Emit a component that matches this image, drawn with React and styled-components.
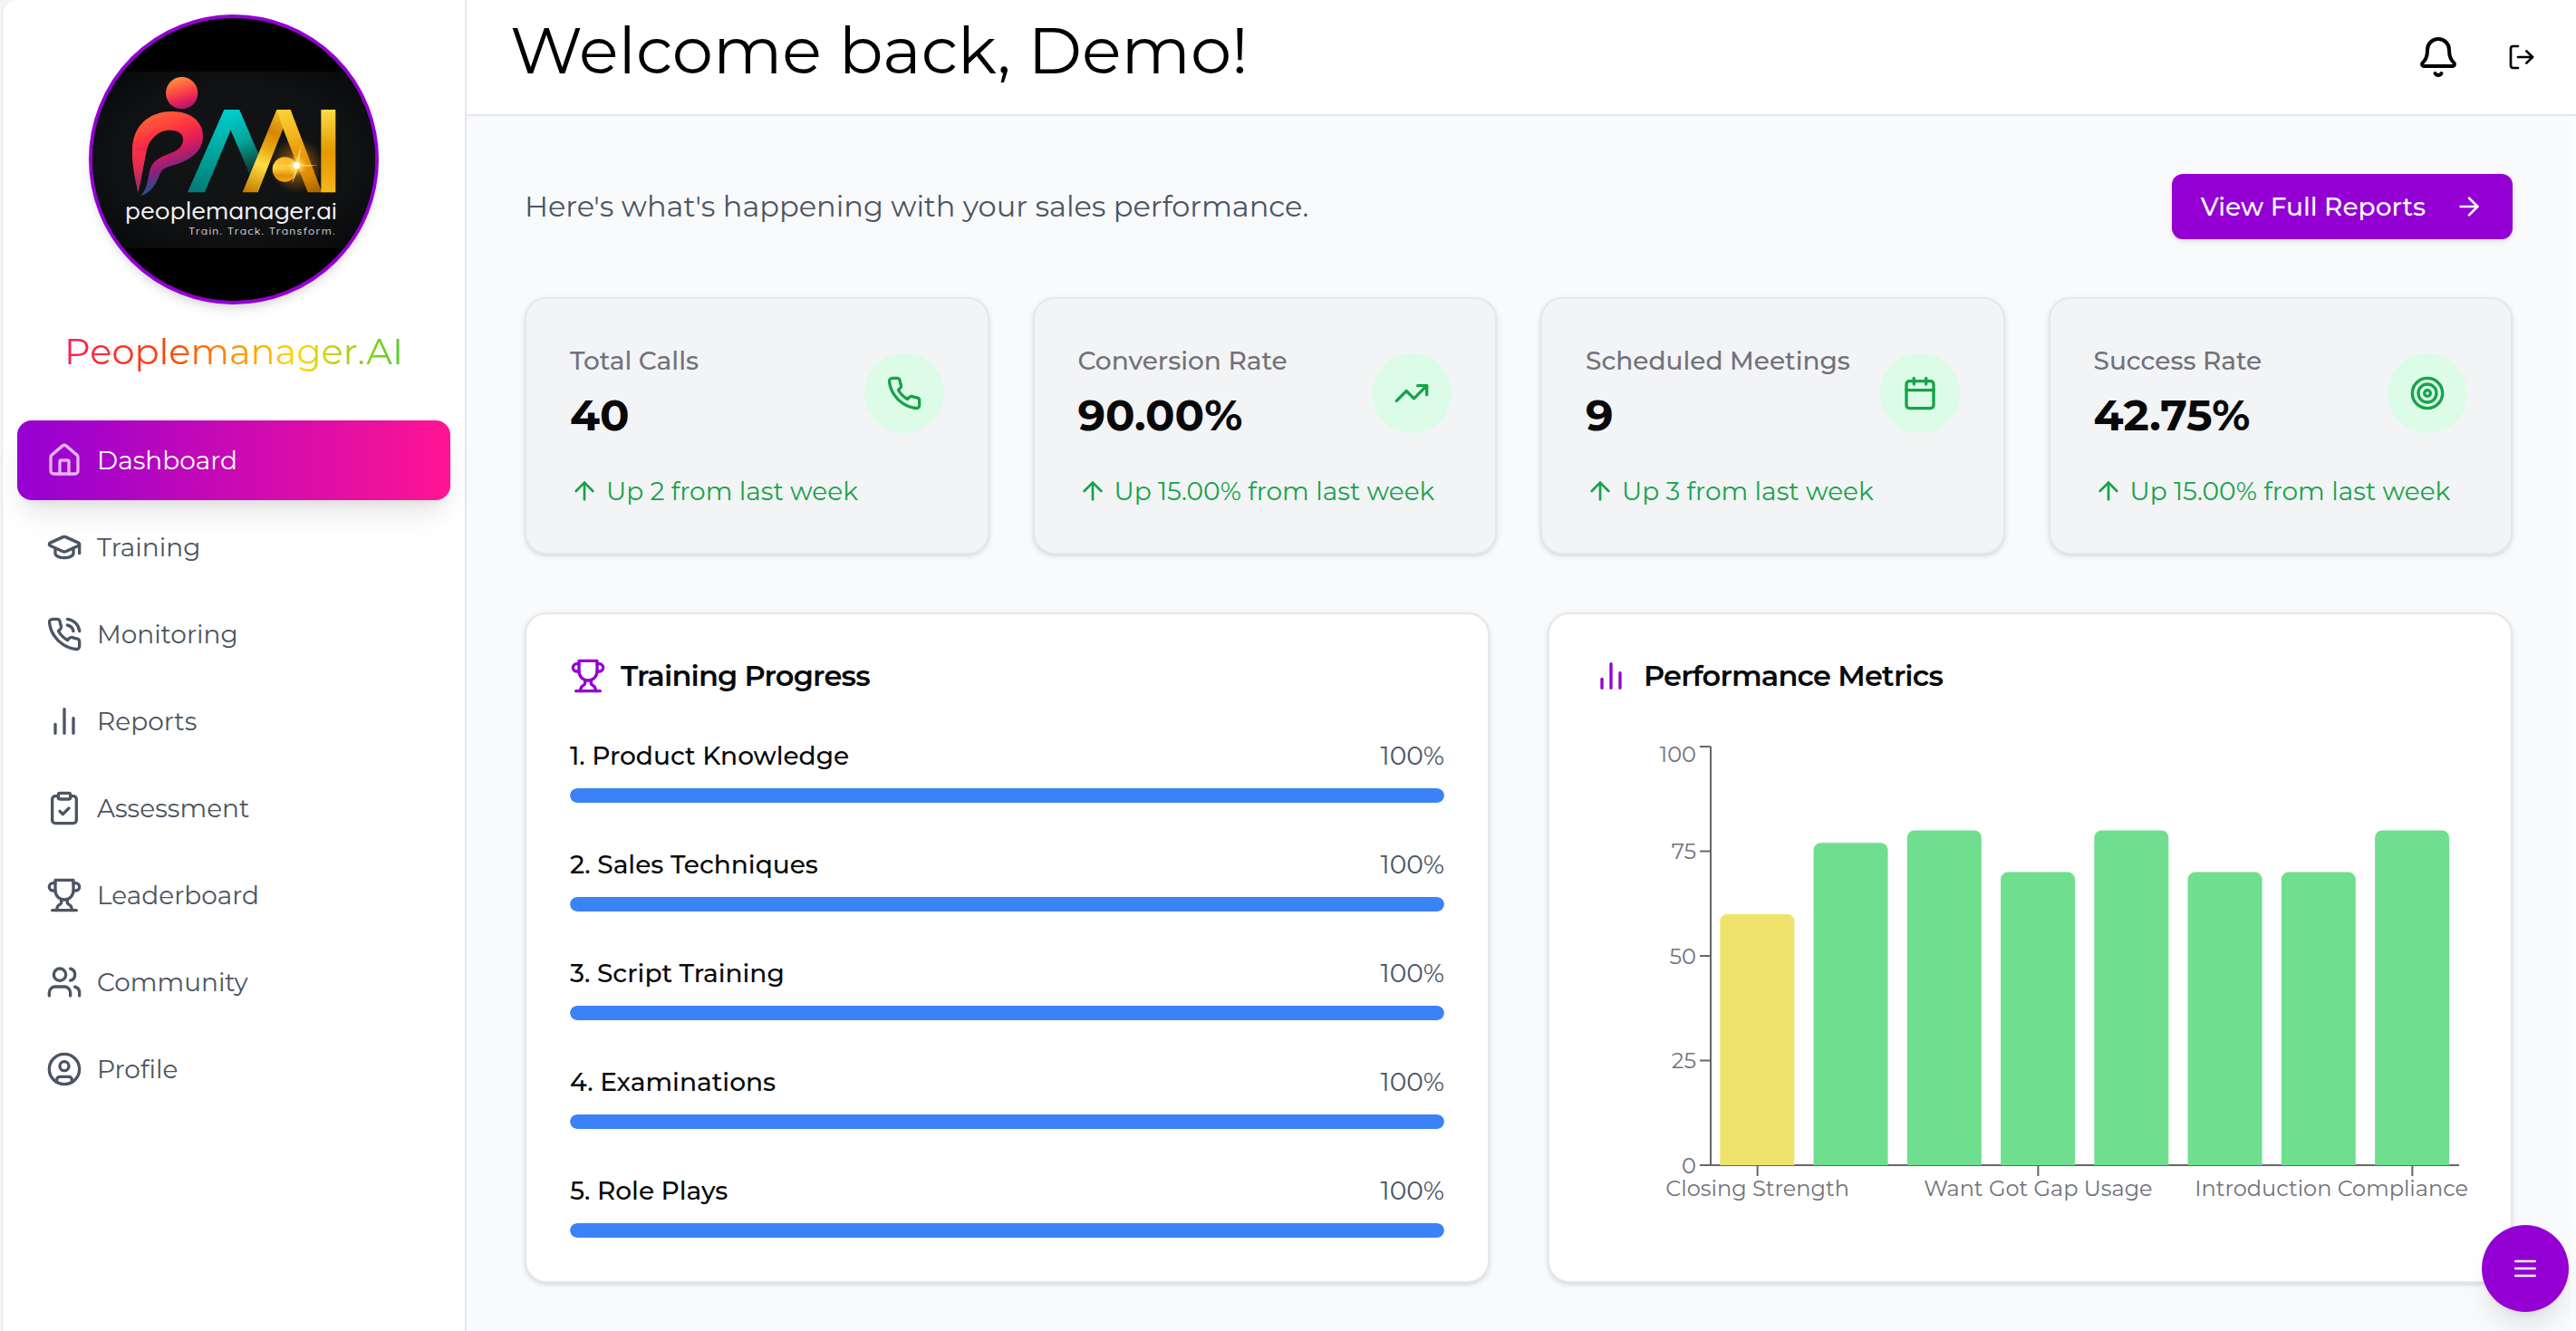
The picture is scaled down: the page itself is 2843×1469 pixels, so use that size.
import React from "react";
import styled, { createGlobalStyle, css } from "styled-components";

const GlobalStyle = createGlobalStyle`
  *, *::before, *::after { box-sizing: border-box; }
  html, body { margin: 0; padding: 0; }
  body {
    font-family: "Montserrat", "Inter", sans-serif;
    font-size: 28px;
    line-height: 40px;
    color: #09090b;
    background: #f5f5f5;
    overflow: hidden;
  }
`;

/* ---------- icons ---------- */

const IconSvg = styled.svg`
  display: block;
  flex: none;
  width: ${(p) => p.$size}px;
  height: ${(p) => p.$size}px;
  fill: none;
  stroke: currentColor;
  stroke-width: 2;
  stroke-linecap: round;
  stroke-linejoin: round;
`;

const PHONE =
  "M22 16.92v3a2 2 0 0 1-2.18 2 19.79 19.79 0 0 1-8.63-3.07 19.5 19.5 0 0 1-6-6 19.79 19.79 0 0 1-3.07-8.67A2 2 0 0 1 4.11 2h3a2 2 0 0 1 2 1.72 12.84 12.84 0 0 0 .7 2.81 2 2 0 0 1-.45 2.11L8.09 9.91a16 16 0 0 0 6 6l1.27-1.27a2 2 0 0 1 2.11-.45 12.84 12.84 0 0 0 2.81.7A2 2 0 0 1 22 16.92z";

const ICONS = {
  house: (
    <>
      <path d="M15 21v-8a1 1 0 0 0-1-1h-4a1 1 0 0 0-1 1v8" />
      <path d="M3 10a2 2 0 0 1 .709-1.528l7-5.999a2 2 0 0 1 2.582 0l7 5.999A2 2 0 0 1 21 10v9a2 2 0 0 1-2 2H5a2 2 0 0 1-2-2z" />
    </>
  ),
  cap: (
    <>
      <path d="M21.42 10.922a1 1 0 0 0-.019-1.838L12.83 5.18a2 2 0 0 0-1.66 0L2.6 9.08a1 1 0 0 0 0 1.832l8.57 3.908a2 2 0 0 0 1.66 0z" />
      <path d="M22 10v6" />
      <path d="M6 12.5V16a6 3 0 0 0 12 0v-3.5" />
    </>
  ),
  phoneCall: (
    <>
      <path d={PHONE} />
      <path d="M14.05 2a9 9 0 0 1 8 7.94" />
      <path d="M14.05 6A5 5 0 0 1 18 10" />
    </>
  ),
  phone: <path d={PHONE} />,
  bars: (
    <>
      <path d="M18 20V10" />
      <path d="M12 20V4" />
      <path d="M6 20v-6" />
    </>
  ),
  clipboard: (
    <>
      <rect width="8" height="4" x="8" y="2" rx="1" ry="1" />
      <path d="M16 4h2a2 2 0 0 1 2 2v14a2 2 0 0 1-2 2H6a2 2 0 0 1-2-2V6a2 2 0 0 1 2-2h2" />
      <path d="m9 14 2 2 4-4" />
    </>
  ),
  trophy: (
    <>
      <path d="M6 9H4.5a2.5 2.5 0 0 1 0-5H6" />
      <path d="M18 9h1.5a2.5 2.5 0 0 0 0-5H18" />
      <path d="M4 22h16" />
      <path d="M10 14.66V17c0 .55-.47.98-.97 1.21C7.85 18.75 7 20.24 7 22" />
      <path d="M14 14.66V17c0 .55.47.98.97 1.21C16.15 18.75 17 20.24 17 22" />
      <path d="M18 2H6v7a6 6 0 0 0 12 0V2Z" />
    </>
  ),
  users: (
    <>
      <path d="M16 21v-2a4 4 0 0 0-4-4H6a4 4 0 0 0-4 4v2" />
      <circle cx="9" cy="7" r="4" />
      <path d="M22 21v-2a4 4 0 0 0-3-3.87" />
      <path d="M16 3.13a4 4 0 0 1 0 7.75" />
    </>
  ),
  user: (
    <>
      <circle cx="12" cy="12" r="10" />
      <circle cx="12" cy="10" r="3" />
      <path d="M7 20.662V19a2 2 0 0 1 2-2h6a2 2 0 0 1 2 2v1.662" />
    </>
  ),
  bell: (
    <>
      <path d="M10.268 21a2 2 0 0 0 3.464 0" />
      <path d="M3.262 15.326A1 1 0 0 0 4 17h16a1 1 0 0 0 .74-1.673C19.41 13.956 18 12.499 18 8A6 6 0 0 0 6 8c0 4.499-1.411 5.956-2.738 7.326" />
    </>
  ),
  logout: (
    <>
      <path d="M9 21H5a2 2 0 0 1-2-2V5a2 2 0 0 1 2-2h4" />
      <path d="m16 17 5-5-5-5" />
      <path d="M21 12H9" />
    </>
  ),
  arrowRight: (
    <>
      <path d="M5 12h14" />
      <path d="m12 5 7 7-7 7" />
    </>
  ),
  arrowUp: (
    <>
      <path d="m5 12 7-7 7 7" />
      <path d="M12 19V5" />
    </>
  ),
  trending: (
    <>
      <path d="m22 7-8.5 8.5-5-5L2 17" />
      <path d="M16 7h6v6" />
    </>
  ),
  calendar: (
    <>
      <path d="M8 2v4" />
      <path d="M16 2v4" />
      <rect width="18" height="18" x="3" y="4" rx="2" />
      <path d="M3 10h18" />
    </>
  ),
  target: (
    <>
      <circle cx="12" cy="12" r="10" />
      <circle cx="12" cy="12" r="6" />
      <circle cx="12" cy="12" r="2" />
    </>
  ),
  menu: (
    <>
      <path d="M4 12h16" />
      <path d="M4 6h16" />
      <path d="M4 18h16" />
    </>
  ),
};

const Icon = ({ name, size = 40 }) => (
  <IconSvg $size={size} viewBox="0 0 24 24" aria-hidden="true">
    {ICONS[name]}
  </IconSvg>
);

/* ---------- shell ---------- */

const Page = styled.div`
  display: flex;
  height: 1469px;
  padding-left: 2px;
`;

const Sidebar = styled.aside`
  flex: none;
  display: flex;
  flex-direction: column;
  align-items: center;
  width: 513px;
  padding: 16px 16px 0;
  background: #fff;
  border-left: 1px solid #e5e5e5;
  border-right: 2px solid #e5e7eb;
  border-top-left-radius: 16px;
`;

const LogoFrame = styled.div`
  width: 320px;
  height: 320px;
  border: 4px solid #9400d3;
  border-radius: 50%;
  background: #000;
  overflow: hidden;
  box-shadow: 0 8px 12px -2px rgba(0, 0, 0, 0.1), 0 4px 8px -4px rgba(0, 0, 0, 0.1);
`;

const LogoSvg = styled.svg`
  display: block;
  width: 312px;
  height: 312px;
`;

const LogoText = styled.text`
  font-family: "Quicksand", "Comfortaa", "Montserrat", sans-serif;
  font-weight: ${(p) => p.$weight};
  font-size: ${(p) => p.$size}px;
  fill: ${(p) => p.$fill};
`;

const Brand = styled.div`
  width: 414px;
  margin: 23px 0 48px;
  text-align: center;
  font-size: 40px;
  line-height: 57px;
  color: transparent;
  background: linear-gradient(90deg, #ff1464, #ff4500, #ffd700, #32cd32);
  -webkit-background-clip: text;
  background-clip: text;
`;

const Nav = styled.nav`
  align-self: stretch;
  display: flex;
  flex-direction: column;
  gap: 8px;
`;

const NavItem = styled.a`
  display: flex;
  align-items: center;
  gap: 16px;
  height: 88px;
  padding: 0 32px;
  border-radius: 16px;
  color: #4b5563;
  ${(p) =>
    p.$active &&
    css`
      color: #fff;
      background: linear-gradient(90deg, #9400d3, #ff1493);
      box-shadow: 0 20px 30px -6px rgba(0, 0, 0, 0.1), 0 8px 12px -8px rgba(0, 0, 0, 0.1);
      ${IconSvg} {
        opacity: 0.7;
      }
    `}
`;

const Content = styled.div`
  flex: 1;
  min-width: 0;
  display: flex;
  flex-direction: column;
`;

const Header = styled.header`
  flex: none;
  display: flex;
  align-items: center;
  gap: 52px;
  height: 128px;
  padding: 0 44px 0 48px;
  background: #fff;
  border-bottom: 2px solid #e5e7eb;
  color: #000;
`;

const Welcome = styled.h1`
  flex: 1;
  margin: 0 0 16px;
  font-size: 72px;
  font-weight: 400;
  line-height: 80px;
`;

const Main = styled.main`
  flex: 1;
  min-height: 0;
  display: flex;
  flex-direction: column;
  gap: 64px;
  padding: 64px 64px 0;
  background: #f9fafb;
  border-right: 6px solid #fbfcfd;
`;

const Intro = styled.div`
  display: flex;
  align-items: center;
  justify-content: space-between;
  height: 72px;
`;

const Subtitle = styled.p`
  margin: 0;
  font-size: 32px;
  color: #4b5563;
`;

const ReportsButton = styled.button`
  display: flex;
  align-items: center;
  gap: 32px;
  height: 72px;
  padding: 0 32px;
  border: 0;
  border-radius: 12px;
  background: #9400d3;
  color: #fafafa;
  font: inherit;
  font-weight: 500;
  box-shadow: 0 2px 6px rgba(0, 0, 0, 0.1), 0 2px 4px -2px rgba(0, 0, 0, 0.1);
`;

/* ---------- stat cards ---------- */

const surface = css`
  border: 2px solid #e5e7eb;
  border-radius: 24px;
  box-shadow: 0 2px 6px rgba(0, 0, 0, 0.1), 0 2px 4px -2px rgba(0, 0, 0, 0.1);
`;

const Stats = styled.section`
  display: grid;
  grid-template-columns: repeat(4, 1fr);
  gap: 48px;
`;

const StatCard = styled.article`
  ${surface}
  display: flex;
  flex-direction: column;
  gap: 32px;
  padding: 48px;
  background: #f3f4f6;
`;

const StatTop = styled.div`
  display: flex;
  align-items: center;
  justify-content: space-between;
`;

const StatText = styled.div`
  display: flex;
  flex-direction: column;
  gap: 8px;
`;

const StatLabel = styled.span`
  font-weight: 500;
  color: #71717a;
  white-space: nowrap;
`;

const StatValue = styled.span`
  font-size: 48px;
  font-weight: 700;
  line-height: 64px;
`;

const StatBadge = styled.div`
  padding: 24px;
  border-radius: 50%;
  background: #dcfce7;
  color: #16a34a;
`;

const Trend = styled.div`
  display: flex;
  align-items: center;
  gap: 8px;
  color: #16a34a;
  white-space: nowrap;
`;

/* ---------- panels ---------- */

const Panels = styled.section`
  display: grid;
  grid-template-columns: 1fr 1fr;
  gap: 64px;
`;

const Panel = styled.article`
  ${surface}
  display: flex;
  flex-direction: column;
  gap: 48px;
  height: 740px;
  padding: 48px;
  background: #fff;
`;

const PanelTitle = styled.h2`
  display: flex;
  align-items: center;
  gap: 16px;
  margin: 0;
  font-size: 32px;
  font-weight: 600;
  letter-spacing: -0.8px;

  ${IconSvg} {
    color: #9400d3;
  }
`;

const Modules = styled.div`
  display: flex;
  flex-direction: column;
  gap: 48px;
`;

const Module = styled.div`
  display: flex;
  flex-direction: column;
  gap: 16px;
`;

const ModuleHead = styled.div`
  display: flex;
  justify-content: space-between;
`;

const ModuleName = styled.span`
  font-weight: 500;
`;

const ModulePercent = styled.span`
  color: #4b5563;
`;

const Track = styled.div`
  height: 16px;
  border-radius: 8px;
  background: #fff;
  overflow: hidden;
`;

const Fill = styled.div`
  height: 100%;
  border-radius: 8px;
  background: #3b82f6;
`;

/* ---------- chart ---------- */

const ChartSvg = styled.svg`
  display: block;
  width: 965px;
  height: 552px;
  overflow: visible;
`;

const AxisLine = styled.path`
  stroke: #666;
  stroke-width: 2;
  fill: none;
`;

const TickText = styled.text`
  font-size: 24px;
  fill: #71717a;
  text-anchor: ${(p) => p.$anchor};
`;

const Fab = styled.button`
  position: fixed;
  right: 8px;
  bottom: 21px;
  display: flex;
  align-items: center;
  justify-content: center;
  width: 96px;
  height: 96px;
  border: 0;
  border-radius: 50%;
  background: #9400d3;
  color: #fff;
  box-shadow: 0 20px 30px -6px rgba(0, 0, 0, 0.1), 0 8px 12px -8px rgba(0, 0, 0, 0.1);
`;

/* ---------- data ---------- */

const NAV = [
  ["house", "Dashboard"],
  ["cap", "Training"],
  ["phoneCall", "Monitoring"],
  ["bars", "Reports"],
  ["clipboard", "Assessment"],
  ["trophy", "Leaderboard"],
  ["users", "Community"],
  ["user", "Profile"],
];

const STATS = [
  ["Total Calls", "40", "Up 2 from last week", "phone"],
  ["Conversion Rate", "90.00%", "Up 15.00% from last week", "trending"],
  ["Scheduled Meetings", "9", "Up 3 from last week", "calendar"],
  ["Success Rate", "42.75%", "Up 15.00% from last week", "target"],
];

const MODULES = [
  ["1. Product Knowledge", 100],
  ["2. Sales Techniques", 100],
  ["3. Script Training", 100],
  ["4. Examinations", 100],
  ["5. Role Plays", 100],
];

const SCORES = [60, 77, 80, 70, 80, 70, 70, 80];

const PLOT = { left: 130, top: 10, bottom: 472, width: 826 };
const BAND = PLOT.width / SCORES.length;
const yOf = (v) => PLOT.bottom - (v / 100) * (PLOT.bottom - PLOT.top);
const centerOf = (i) => PLOT.left + BAND * (i + 0.5);

function Bar({ index, value }) {
  const x = PLOT.left + BAND * index + BAND * 0.1;
  const y = yOf(value);
  const w = 82;
  const r = 8;
  return (
    <path
      fill={value < 70 ? "#f0e36b" : "#6fdf8f"}
      d={`M${x} ${PLOT.bottom}V${y + r}a${r} ${r} 0 0 1 ${r} ${-r}h${w - 2 * r}a${r} ${r} 0 0 1 ${r} ${r}V${PLOT.bottom}Z`}
    />
  );
}

function MetricsChart() {
  return (
    <ChartSvg viewBox="0 0 965 552">
      <AxisLine d={`M${PLOT.left} ${PLOT.bottom}h${PLOT.width}`} />
      {[0, 3, 7].map((i) => (
        <AxisLine key={i} d={`M${centerOf(i)} ${PLOT.bottom}v12`} />
      ))}
      <TickText $anchor="middle" x={centerOf(0)} y="506">Closing Strength</TickText>
      <TickText $anchor="middle" x={centerOf(3)} y="506">Want Got Gap Usage</TickText>
      <TickText $anchor="end" x="966" y="506">Introduction Compliance</TickText>
      <AxisLine d={`M${PLOT.left} ${PLOT.top}V${PLOT.bottom}`} />
      {[0, 25, 50, 75, 100].map((v) => (
        <React.Fragment key={v}>
          <AxisLine d={`M${PLOT.left - 12} ${yOf(v)}h12`} />
          <TickText $anchor="end" x={PLOT.left - 16} y={v === 100 ? 27 : yOf(v) + 8.5}>{v}</TickText>
        </React.Fragment>
      ))}
      {SCORES.map((v, i) => (
        <Bar key={i} index={i} value={v} />
      ))}
    </ChartSvg>
  );
}

function Logo() {
  return (
    <LogoSvg viewBox="0 0 936 936" role="img">
      <defs>
        <radialGradient id="plate" cx="50%" cy="50%" r="62%">
          <stop offset="0" stopColor="#121416" />
          <stop offset="0.7" stopColor="#0f1113" />
          <stop offset="1" stopColor="#090a0b" />
        </radialGradient>
        <linearGradient id="head" x1="0.35" y1="0" x2="0.65" y2="1">
          <stop offset="0" stopColor="#ff9438" />
          <stop offset="0.5" stopColor="#fb3f48" />
          <stop offset="0.8" stopColor="#d81b60" />
          <stop offset="1" stopColor="#9a1d74" />
        </linearGradient>
        <linearGradient id="body" gradientUnits="userSpaceOnUse" x1="90" y1="165" x2="185" y2="430">
          <stop offset="0" stopColor="#ff6a35" />
          <stop offset="0.28" stopColor="#ff363f" />
          <stop offset="0.5" stopColor="#dc1a5c" />
          <stop offset="0.7" stopColor="#84237f" />
          <stop offset="0.84" stopColor="#3a4488" />
          <stop offset="1" stopColor="#007a96" />
        </linearGradient>
        <linearGradient id="stem" gradientUnits="userSpaceOnUse" x1="60" y1="260" x2="72" y2="430">
          <stop offset="0" stopColor="#ff383f" stopOpacity="1" />
          <stop offset="0.5" stopColor="#e52a52" />
          <stop offset="1" stopColor="#8f2a68" />
        </linearGradient>
        <linearGradient id="teal" x1="0.4" y1="0" x2="0.3" y2="1">
          <stop offset="0" stopColor="#00cccb" />
          <stop offset="0.5" stopColor="#00a69e" />
          <stop offset="1" stopColor="#047c76" />
        </linearGradient>
        <linearGradient id="tealDark" gradientUnits="userSpaceOnUse" x1="385" y1="160" x2="455" y2="345">
          <stop offset="0" stopColor="#00cccb" />
          <stop offset="0.5" stopColor="#05a59a" />
          <stop offset="0.8" stopColor="#0a6b60" />
          <stop offset="1" stopColor="#0b3f38" />
        </linearGradient>
        <linearGradient id="goldLeg" gradientUnits="userSpaceOnUse" x1="540" y1="160" x2="430" y2="425">
          <stop offset="0" stopColor="#f4b824" />
          <stop offset="0.25" stopColor="#d58700" />
          <stop offset="0.45" stopColor="#e9a912" />
          <stop offset="0.65" stopColor="#ffde45" />
          <stop offset="1" stopColor="#c77c00" />
        </linearGradient>
        <linearGradient id="goldLegRight" gradientUnits="userSpaceOnUse" x1="550" y1="155" x2="660" y2="425">
          <stop offset="0" stopColor="#fbcf38" />
          <stop offset="0.3" stopColor="#f2b61c" />
          <stop offset="0.55" stopColor="#e09a08" />
          <stop offset="0.8" stopColor="#d08400" />
          <stop offset="1" stopColor="#a96500" />
        </linearGradient>
        <linearGradient id="goldI" x1="0" y1="0" x2="0" y2="1">
          <stop offset="0" stopColor="#fddc4a" />
          <stop offset="0.5" stopColor="#e39a00" />
          <stop offset="0.75" stopColor="#eda50a" />
          <stop offset="1" stopColor="#f7b71c" />
        </linearGradient>
        <linearGradient id="coin" x1="0" y1="0" x2="0" y2="1">
          <stop offset="0" stopColor="#f7c634" />
          <stop offset="0.45" stopColor="#ffe050" />
          <stop offset="0.75" stopColor="#d88d06" />
          <stop offset="1" stopColor="#eeb21e" />
        </linearGradient>
        <radialGradient id="glow">
          <stop offset="0" stopColor="#fff6c8" />
          <stop offset="0.14" stopColor="#ffdf6a" stopOpacity="0.9" />
          <stop offset="0.38" stopColor="#ff9a10" stopOpacity="0.4" />
          <stop offset="1" stopColor="#ff8a00" stopOpacity="0" />
        </radialGradient>
      </defs>
      <rect y="177" width="936" height="585" fill="url(#plate)" />
      <g transform="translate(84 150)">
        <circle cx="212" cy="98" r="53" fill="url(#head)" />
        <path
          fill="url(#body)"
          d="M67 428C60 388 48 350 48 288C48 212 98 159 180 159C240 159 282 192 282 240C282 290 244 316 200 332C172 341 152 344 144 358C132 380 124 422 75 440C98 412 98 388 104 362C111 328 130 315 160 303C192 291 216 280 216 251C216 232 198 221 174 221C132 221 104 252 95 290C86 328 78 388 67 428Z"
        />
        <path fill="url(#stem)" d="M67 428C60 388 48 350 48 288L95 290C86 328 78 388 67 428Z" />
        <path fill="url(#tealDark)" d="M352 153H402L474 318L444 384L376 225Z" />
        <path fill="url(#teal)" d="M352 153H402L288 427H231Z" />
        <path fill="url(#tealDark)" d="M372 153H402L436 231L400 280L376 225L362 180Z" />
        <path fill="url(#goldLeg)" d="M526 153H572L464 427H413Z" />
        <path fill="url(#goldLegRight)" d="M526 153H572L676 427H629L547 215Z" />
        <rect x="673" y="153" width="48" height="274" fill="url(#goldI)" />
        <circle cx="553" cy="351" r="41" fill="url(#coin)" />
        <circle cx="592" cy="338" r="92" fill="url(#glow)" />
        <path fill="#ffd76a" opacity="0.85" d="M512 338L586 335L608 270L599 334L664 338L599 342L578 398L588 342Z" />
        <circle cx="592" cy="338" r="11" fill="#fff" />
        <LogoText $weight={500} $size={78} $fill="#f4f2f2" x="24" y="515" textLength="702" lengthAdjust="spacingAndGlyphs">
          peoplemanager.ai
        </LogoText>
        <LogoText $weight={500} $size={36} $fill="#d8d8d8" x="234" y="567" textLength="484" lengthAdjust="spacing">
          Train. Track. Transform.
        </LogoText>
      </g>
    </LogoSvg>
  );
}

export default function App() {
  return (
    <>
      <GlobalStyle />
      <Page>
        <Sidebar>
          <LogoFrame>
            <Logo />
          </LogoFrame>
          <Brand>Peoplemanager.AI</Brand>
          <Nav>
            {NAV.map(([icon, label], i) => (
              <NavItem key={label} $active={i === 0}>
                <Icon name={icon} />
                <span>{label}</span>
              </NavItem>
            ))}
          </Nav>
        </Sidebar>
        <Content>
          <Header>
            <Welcome>Welcome back, Demo!</Welcome>
            <Icon name="bell" size={48} />
            <Icon name="logout" size={32} />
          </Header>
          <Main>
            <Intro>
              <Subtitle>Here's what's happening with your sales performance.</Subtitle>
              <ReportsButton>
                View Full Reports
                <Icon name="arrowRight" size={32} />
              </ReportsButton>
            </Intro>
            <Stats>
              {STATS.map(([label, value, trend, icon]) => (
                <StatCard key={label}>
                  <StatTop>
                    <StatText>
                      <StatLabel>{label}</StatLabel>
                      <StatValue>{value}</StatValue>
                    </StatText>
                    <StatBadge>
                      <Icon name={icon} />
                    </StatBadge>
                  </StatTop>
                  <Trend>
                    <Icon name="arrowUp" size={32} />
                    <span>{trend}</span>
                  </Trend>
                </StatCard>
              ))}
            </Stats>
            <Panels>
              <Panel>
                <PanelTitle>
                  <Icon name="trophy" />
                  Training Progress
                </PanelTitle>
                <Modules>
                  {MODULES.map(([name, pct]) => (
                    <Module key={name}>
                      <ModuleHead>
                        <ModuleName>{name}</ModuleName>
                        <ModulePercent>{pct}%</ModulePercent>
                      </ModuleHead>
                      <Track>
                        <Fill style={{ width: `${pct}%` }} />
                      </Track>
                    </Module>
                  ))}
                </Modules>
              </Panel>
              <Panel>
                <PanelTitle>
                  <Icon name="bars" />
                  Performance Metrics
                </PanelTitle>
                <MetricsChart />
              </Panel>
            </Panels>
          </Main>
        </Content>
      </Page>
      <Fab aria-label="Menu">
        <Icon name="menu" size={32} />
      </Fab>
    </>
  );
}
